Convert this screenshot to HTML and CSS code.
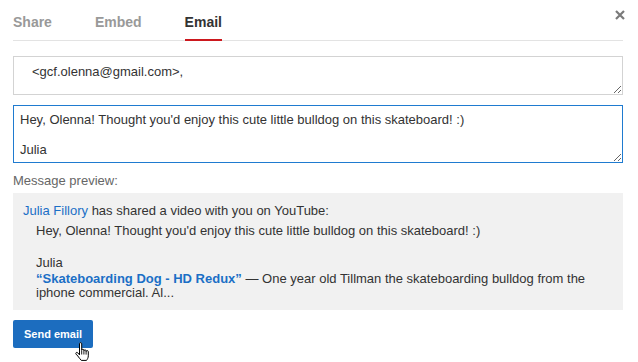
FILE: index.html
```html
<html><head>
<meta charset="utf-8">
<title>Share video</title>
<link rel="stylesheet" href="styles.css">
</head>
<body>
<div class="dialog">
  <div class="tabs">
    <span class="tab">Share</span>
    <span class="tab">Embed</span>
    <span class="tab active">Email</span>
    <span class="close">
      <svg width="10" height="10" viewBox="0 0 10 10"><path d="M1 1L9 9M9 1L1 9" stroke="#7a7a7a" stroke-width="2.2"/></svg>
    </span>
  </div>

  <textarea class="to">&lt;gcf.olenna@gmail.com&gt;,</textarea>
  <textarea class="msg focus">Hey, Olenna! Thought you'd enjoy this cute little bulldog on this skateboard! :)

Julia</textarea>

  <div class="label">Message preview:</div>
  <div class="preview">
    <p class="from"><a href="#">Julia Fillory</a> has shared a video with you on YouTube:</p>
    <p class="body">Hey, Olenna! Thought you'd enjoy this cute little bulldog on this skateboard! :)<br><br>Julia</p>
    <p class="video"><a href="#"><b>“Skateboarding Dog - HD Redux”</b></a> — One year old Tillman the skateboarding bulldog from the<br>iphone commercial. Al...</p>
  </div>

  <div class="actions">
    <button class="send">Send email</button>
    <svg class="cursor" width="17" height="20" viewBox="0 0 17 20">
      <path d="M6.5 1.8c0-.7.5-1.2 1.1-1.2s1.1.5 1.1 1.2V8.3c0-.6.5-1.1 1.1-1.1s1.1.5 1.1 1.1v.6c0-.6.5-1.1 1.1-1.1s1.1.5 1.1 1.1v.7c0-.6.5-1 1.1-1s1.1.4 1.1 1v4.2c0 2-.9 3.4-1.8 4.6H8.3c-1-1-2.4-2.9-3.5-4.4L3 12.1c-.4-.6-.2-1.3.3-1.6.6-.3 1.2-.1 1.6.5l1.6 1.9z" fill="#fff" stroke="#000" stroke-width="1" stroke-linejoin="round"/>
      <path d="M8.7 8.5v4M10.9 9v3.5M13.1 9.6v3" stroke="#000" stroke-width="0.9"/>
    </svg>
  </div>
</div>
</body></html>
```
FILE: styles.css
```css
BODY {margin: 0; background-color: white; font-family: Arial, "Liberation Sans", Sans-Serif; font-size: 13px; color: #333;}

.dialog {padding: 0 15px 0 13px;}

.tabs {display: flex; align-items: flex-start; height: 40px; border-bottom: 1px solid #e3e3e3;}
.tab {box-sizing: border-box; height: 41px; margin-bottom: -1px; margin-right: 43px; padding-top: 14px; line-height: 16px; font-size: 14px; font-weight: bold; color: #999;}
.tab.active {color: #333; border-bottom: 2px solid #cc181e;}
.close {margin-left: auto; margin-right: -2px; margin-top: 10px; height: 10px;}
.close svg {display: block;}

textarea {display: block; box-sizing: border-box; width: 100%; margin: 0; resize: vertical; font-family: Arial, "Liberation Sans", Sans-Serif; font-size: 13px; line-height: 15px; color: #333; border: 1px solid #d3d3d3; outline: none;}
.to {margin-top: 15px; height: 39px; padding: 7px 6px 0 18px;}
.msg {margin-top: 10px; height: 58px; padding: 6px 6px 0 6px;}
.msg.focus {border-color: #1f7bd0;}

.label {margin-top: 10px; line-height: 16px; color: #666;}

.preview {margin-top: 4px; height: 117px; box-sizing: border-box; padding: 10px 10px 0 10px; background-color: #f1f1f1;}
.preview p {margin: 0;}
.preview a {color: #1b6fc6; text-decoration: none;}
.from {line-height: 16px;}
.body {margin-top: 4px !important; margin-left: 13px !important; line-height: 16px;}
.video {margin-left: 13px !important; line-height: 14px; padding-top: 1px;}

.actions {position: relative; margin-top: 10px;}
.send {display: block; width: 80px; height: 28px; padding: 0; border: none; border-radius: 2px; background-color: #1c6dbf; color: white; font-family: Arial, "Liberation Sans", Sans-Serif; font-size: 11px; font-weight: bold;}
.cursor {position: absolute; left: 60px; top: 22px;}
```
